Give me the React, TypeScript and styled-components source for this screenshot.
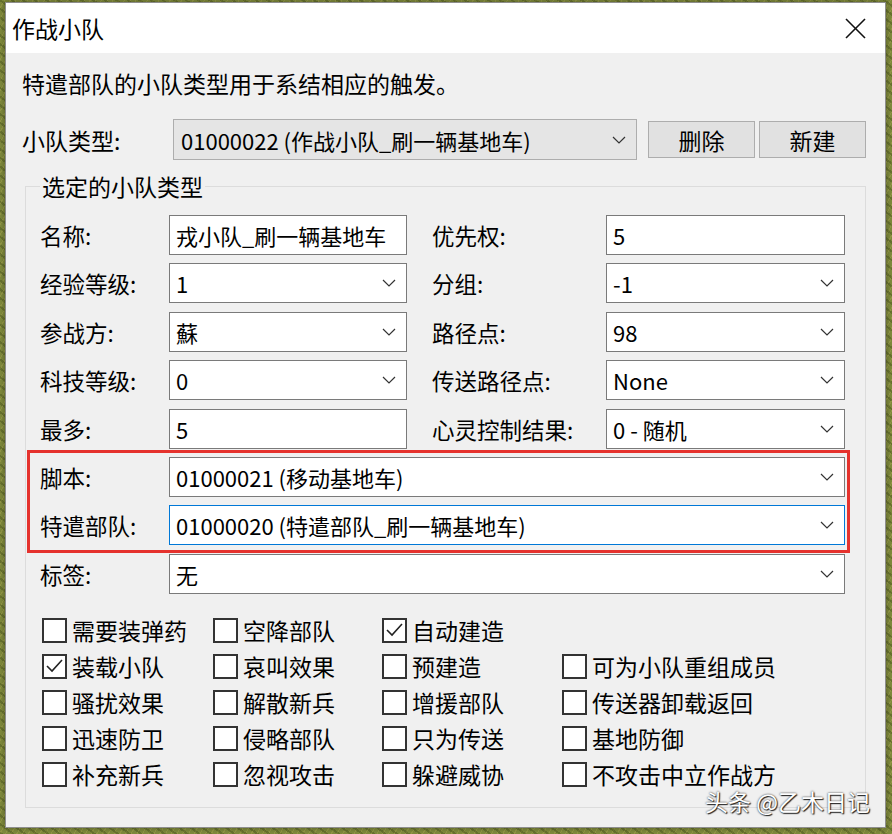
import React from "react"
import styled, { createGlobalStyle, css } from "styled-components"

const GlobalStyle = createGlobalStyle`
  html, body {
    margin: 0;
    padding: 0;
  }
  body {
    width: 892px;
    height: 834px;
    overflow: hidden;
    font-family: "Noto Sans CJK SC", "Noto Sans", sans-serif;
    color: #000;
    background-color: #7f8a3c;
    background-image:
      repeating-linear-gradient(37deg, rgba(60, 70, 20, 0.35) 0 2px, transparent 2px 7px),
      repeating-linear-gradient(-61deg, rgba(190, 180, 90, 0.3) 0 1px, transparent 1px 5px);
  }
`

type Cell = { label: string; value: string; combo?: boolean }

const pairs: [Cell, Cell][] = [
  [
    { label: "名称:", value: "戎小队_刷一辆基地车" },
    { label: "优先权:", value: "5" },
  ],
  [
    { label: "经验等级:", value: "1", combo: true },
    { label: "分组:", value: "-1", combo: true },
  ],
  [
    { label: "参战方:", value: "蘇", combo: true },
    { label: "路径点:", value: "98", combo: true },
  ],
  [
    { label: "科技等级:", value: "0", combo: true },
    { label: "传送路径点:", value: "None", combo: true },
  ],
  [
    { label: "最多:", value: "5" },
    { label: "心灵控制结果:", value: "0 - 随机", combo: true },
  ],
]

const flags: { text: string; checked?: boolean }[][] = [
  [{ text: "需要装弹药" }, { text: "空降部队" }, { text: "自动建造", checked: true }],
  [{ text: "装载小队", checked: true }, { text: "哀叫效果" }, { text: "预建造" }, { text: "可为小队重组成员" }],
  [{ text: "骚扰效果" }, { text: "解散新兵" }, { text: "增援部队" }, { text: "传送器卸载返回" }],
  [{ text: "迅速防卫" }, { text: "侵略部队" }, { text: "只为传送" }, { text: "基地防御" }],
  [{ text: "补充新兵" }, { text: "忽视攻击" }, { text: "躲避威协" }, { text: "不攻击中立作战方" }],
]

const Chevron = () => (
  <svg width="14" height="8" viewBox="0 0 14 8">
    <polyline points="1,1 7,7 13,1" fill="none" stroke="#333" strokeWidth="1.2" />
  </svg>
)

export default function App() {
  return (
    <Page>
      <GlobalStyle />
      <Window>
        <TitleBar>
          <Title>作战小队</Title>
          <CloseIcon width="21" height="21" viewBox="0 0 21 21">
            <line x1="1" y1="1" x2="20" y2="20" stroke="#111" strokeWidth="1.6" />
            <line x1="20" y1="1" x2="1" y2="20" stroke="#111" strokeWidth="1.6" />
          </CloseIcon>
        </TitleBar>

        <Body>
          <Description>特遣部队的小队类型用于系结相应的触发。</Description>

          <TypeRow>
            <TypeLabel>小队类型:</TypeLabel>
            <TypeCombo>
              <span>01000022 (作战小队_刷一辆基地车)</span>
              <Chevron />
            </TypeCombo>
            <Button $gap={11}>删除</Button>
            <Button $gap={4}>新建</Button>
          </TypeRow>

          <Group>
            <Legend>选定的小队类型</Legend>
            <Fields>
              {pairs.map(([a, b]) => (
                <FieldRow key={a.label}>
                  <Label>{a.label}</Label>
                  <Field>
                    <Value>{a.value}</Value>
                    {a.combo && <Chevron />}
                  </Field>
                  <Label $right>{b.label}</Label>
                  <Field>
                    <Value>{b.value}</Value>
                    {b.combo && <Chevron />}
                  </Field>
                </FieldRow>
              ))}

              <Highlight>
                <FieldRow>
                  <Label>脚本:</Label>
                  <Field $wide>
                    <Value>01000021 (移动基地车)</Value>
                    <Chevron />
                  </Field>
                </FieldRow>
                <FieldRow>
                  <Label>特遣部队:</Label>
                  <Field $wide $focused>
                    <Value>01000020 (特遣部队_刷一辆基地车)</Value>
                    <Chevron />
                  </Field>
                </FieldRow>
              </Highlight>

              <FieldRow>
                <Label>标签:</Label>
                <Field $wide>
                  <Value>无</Value>
                  <Chevron />
                </Field>
              </FieldRow>
            </Fields>

            <Flags>
              {flags.map((row, r) =>
                row.map((f, c) => (
                  <Flag key={`${r}-${c}`} style={{ gridRow: r + 1, gridColumn: c + 1 }}>
                    <Box>
                      {f.checked && (
                        <svg width="21" height="21" viewBox="0 0 21 21">
                          <polyline points="3,10 8,15 18,4" fill="none" stroke="#222" strokeWidth="1.6" />
                        </svg>
                      )}
                    </Box>
                    {f.text}
                  </Flag>
                ))
              )}
            </Flags>
          </Group>
        </Body>

        <Watermark>头条 @乙木日记</Watermark>
      </Window>
    </Page>
  )
}

const Page = styled.div`
  padding: 2px 6px 6px 5px;
`

const Window = styled.div`
  position: relative;
  width: 881px;
  height: 826px;
  box-sizing: border-box;
  border: 1px solid #8e8e8e;
  background: #f0f0f0;
  display: flex;
  flex-direction: column;
  box-shadow: 0 0 6px rgba(0, 0, 0, 0.35);
`

const TitleBar = styled.div`
  height: 50px;
  background: #fff;
  display: flex;
  align-items: center;
  justify-content: space-between;
  padding: 0 19px 0 6px;
`

const Title = styled.div`
  font-size: 23px;
  line-height: 30px;
`

const CloseIcon = styled.svg`
  display: block;
`

const Body = styled.div`
  flex: 1;
  display: flex;
  flex-direction: column;
  padding: 15px 19px 0 16px;
`

const Description = styled.div`
  font-size: 23px;
  line-height: 30px;
`

const TypeRow = styled.div`
  margin-top: 21px;
  height: 41px;
  display: flex;
  align-items: center;
`

const TypeLabel = styled.div`
  width: 151px;
  font-size: 23px;
`

const boxBase = css`
  box-sizing: border-box;
  display: flex;
  align-items: center;
  justify-content: space-between;
  font-size: 22px;
`

const TypeCombo = styled.div`
  ${boxBase};
  width: 464px;
  height: 41px;
  padding: 0 10px 0 7px;
  background: #e5e5e5;
  border: 1px solid #adadad;
`

const Button = styled.div<{ $gap: number }>`
  box-sizing: border-box;
  width: 107px;
  height: 37px;
  margin-left: ${(p) => p.$gap}px;
  display: flex;
  align-items: center;
  justify-content: center;
  font-size: 23px;
  background: #e1e1e1;
  border: 1px solid #adadad;
`

const Group = styled.fieldset`
  margin: 11px 0 0 3px;
  padding: 14px 20px 20px 14px;
  border: 1px solid #dcdcdc;
  min-width: 0;
`

const Legend = styled.legend`
  padding: 0 2px;
  font-size: 23px;
  line-height: 30px;
`

const Fields = styled.div`
  display: flex;
  flex-direction: column;
  gap: 8.4px;
`

const FieldRow = styled.div`
  display: grid;
  grid-template-columns: 129px 238px 199px 239px;
  height: 40px;
  align-items: center;
`

const Label = styled.div<{ $right?: boolean }>`
  font-size: 22.5px;
  white-space: nowrap;
  padding-left: ${(p) => (p.$right ? "25px" : "0")};
`

const Field = styled.div<{ $wide?: boolean; $focused?: boolean }>`
  ${boxBase};
  height: 40px;
  padding: 0 10px 0 6px;
  background: #fff;
  border: 1px solid ${(p) => (p.$focused ? "#0078d7" : "#7a7a7a")};
  grid-column: ${(p) => (p.$wide ? "2 / 5" : "auto")};
  overflow: hidden;
`

const Value = styled.span`
  white-space: nowrap;
`

const Highlight = styled.div`
  display: flex;
  flex-direction: column;
  gap: 8.4px;
  margin: -7px -5px -8px -13px;
  padding: 4px 2px 5px 10px;
  border: 3px solid #e5322d;
`

const Flags = styled.div`
  margin: 24px 0 0 2px;
  display: grid;
  grid-template-columns: 171px 169px 180px auto;
  grid-template-rows: repeat(5, 25px);
  row-gap: 11px;
`

const Flag = styled.div`
  display: flex;
  align-items: center;
  gap: 5px;
  font-size: 23px;
  line-height: 25px;
  white-space: nowrap;
`

const Box = styled.div`
  box-sizing: border-box;
  width: 25px;
  height: 25px;
  flex: none;
  border: 2px solid #333;
  background: #fff;
  display: flex;
  align-items: center;
  justify-content: center;
`

const Watermark = styled.div`
  position: absolute;
  right: 15px;
  bottom: 14px;
  font-size: 23px;
  line-height: 1;
  color: #fff;
  text-shadow: 0 0 2px #222, 1px 1px 1px #222;
`
